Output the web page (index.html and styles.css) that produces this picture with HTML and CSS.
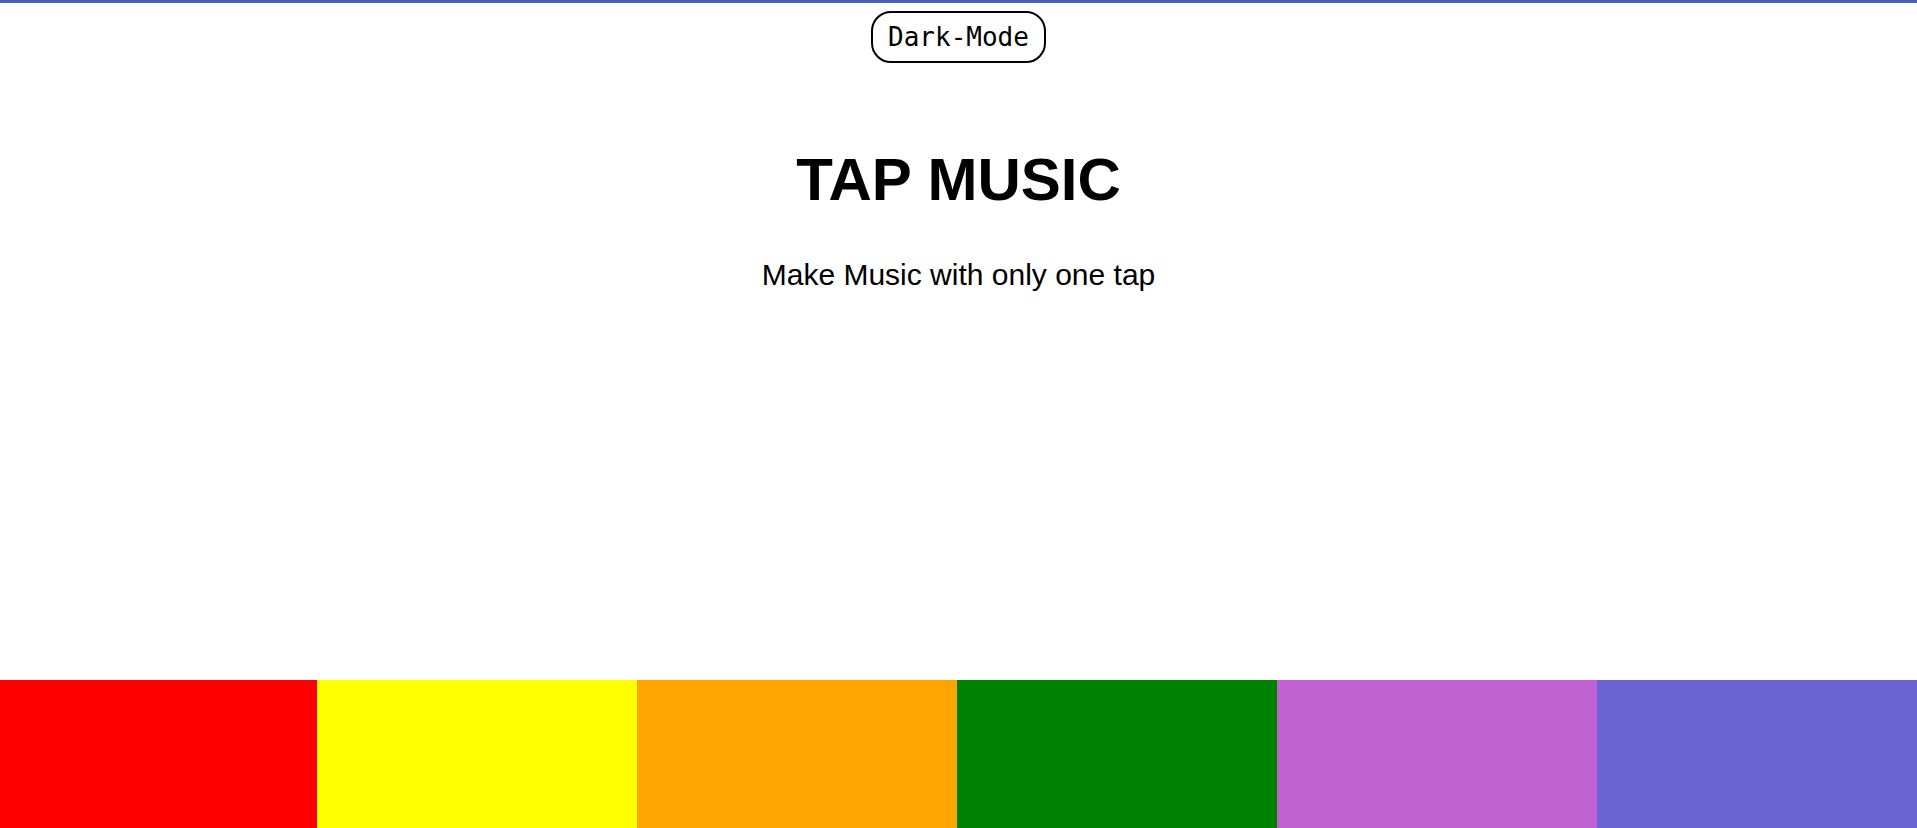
FILE: index.html
```html
<!DOCTYPE html>
<html lang="en">
<head>
<meta charset="utf-8">
<title>Tap Music</title>
<link rel="stylesheet" href="styles.css">
</head>
<body>
<header class="top">
  <button class="mode-btn" type="button">Dark-Mode</button>
</header>
<main class="intro">
  <h1 class="title">TAP MUSIC</h1>
  <p class="subtitle">Make Music with only one tap</p>
</main>
<section class="pads">
  <div class="pad pad-red"></div>
  <div class="pad pad-yellow"></div>
  <div class="pad pad-orange"></div>
  <div class="pad pad-green"></div>
  <div class="pad pad-purple"></div>
  <div class="pad pad-blue"></div>
</section>
</body>
</html>
```

FILE: styles.css
```css
html, body {
  margin: 0;
  padding: 0;
}

body {
  box-sizing: border-box;
  min-height: 100vh;
  border-top: 3px solid #4a60c0;
  display: flex;
  flex-direction: column;
  background: #ffffff;
  color: #000000;
  font-family: "Liberation Sans", Arial, sans-serif;
  overflow: hidden;
}

.top {
  display: flex;
  justify-content: center;
  padding-top: 8px;
}

.mode-btn {
  height: 52px;
  padding: 0 15px;
  border: 2px solid #000000;
  border-radius: 20px;
  background: #ffffff;
  color: #000000;
  font-family: "DejaVu Sans Mono", "Liberation Mono", monospace;
  font-size: 26px;
  line-height: 1;
  cursor: pointer;
}

.intro {
  display: flex;
  flex-direction: column;
  align-items: center;
  text-align: center;
}

.title {
  margin: 82px 0 0;
  font-size: 60px;
  font-weight: 700;
  line-height: 69px;
}

.subtitle {
  margin: 44px 0 0;
  font-size: 30px;
  line-height: 34.5px;
}

.pads {
  margin-top: auto;
  margin-left: -3px;
  width: calc(100% + 3px);
  height: 148px;
  display: flex;
  flex-shrink: 0;
}

.pad {
  flex: 1 1 0;
  cursor: pointer;
}

.pad-red { background: #ff0000; }
.pad-yellow { background: #ffff00; }
.pad-orange { background: #ffa500; }
.pad-green { background: #008000; }
.pad-purple { background: #c062d2; }
.pad-blue { background: #6c63d3; }
```
